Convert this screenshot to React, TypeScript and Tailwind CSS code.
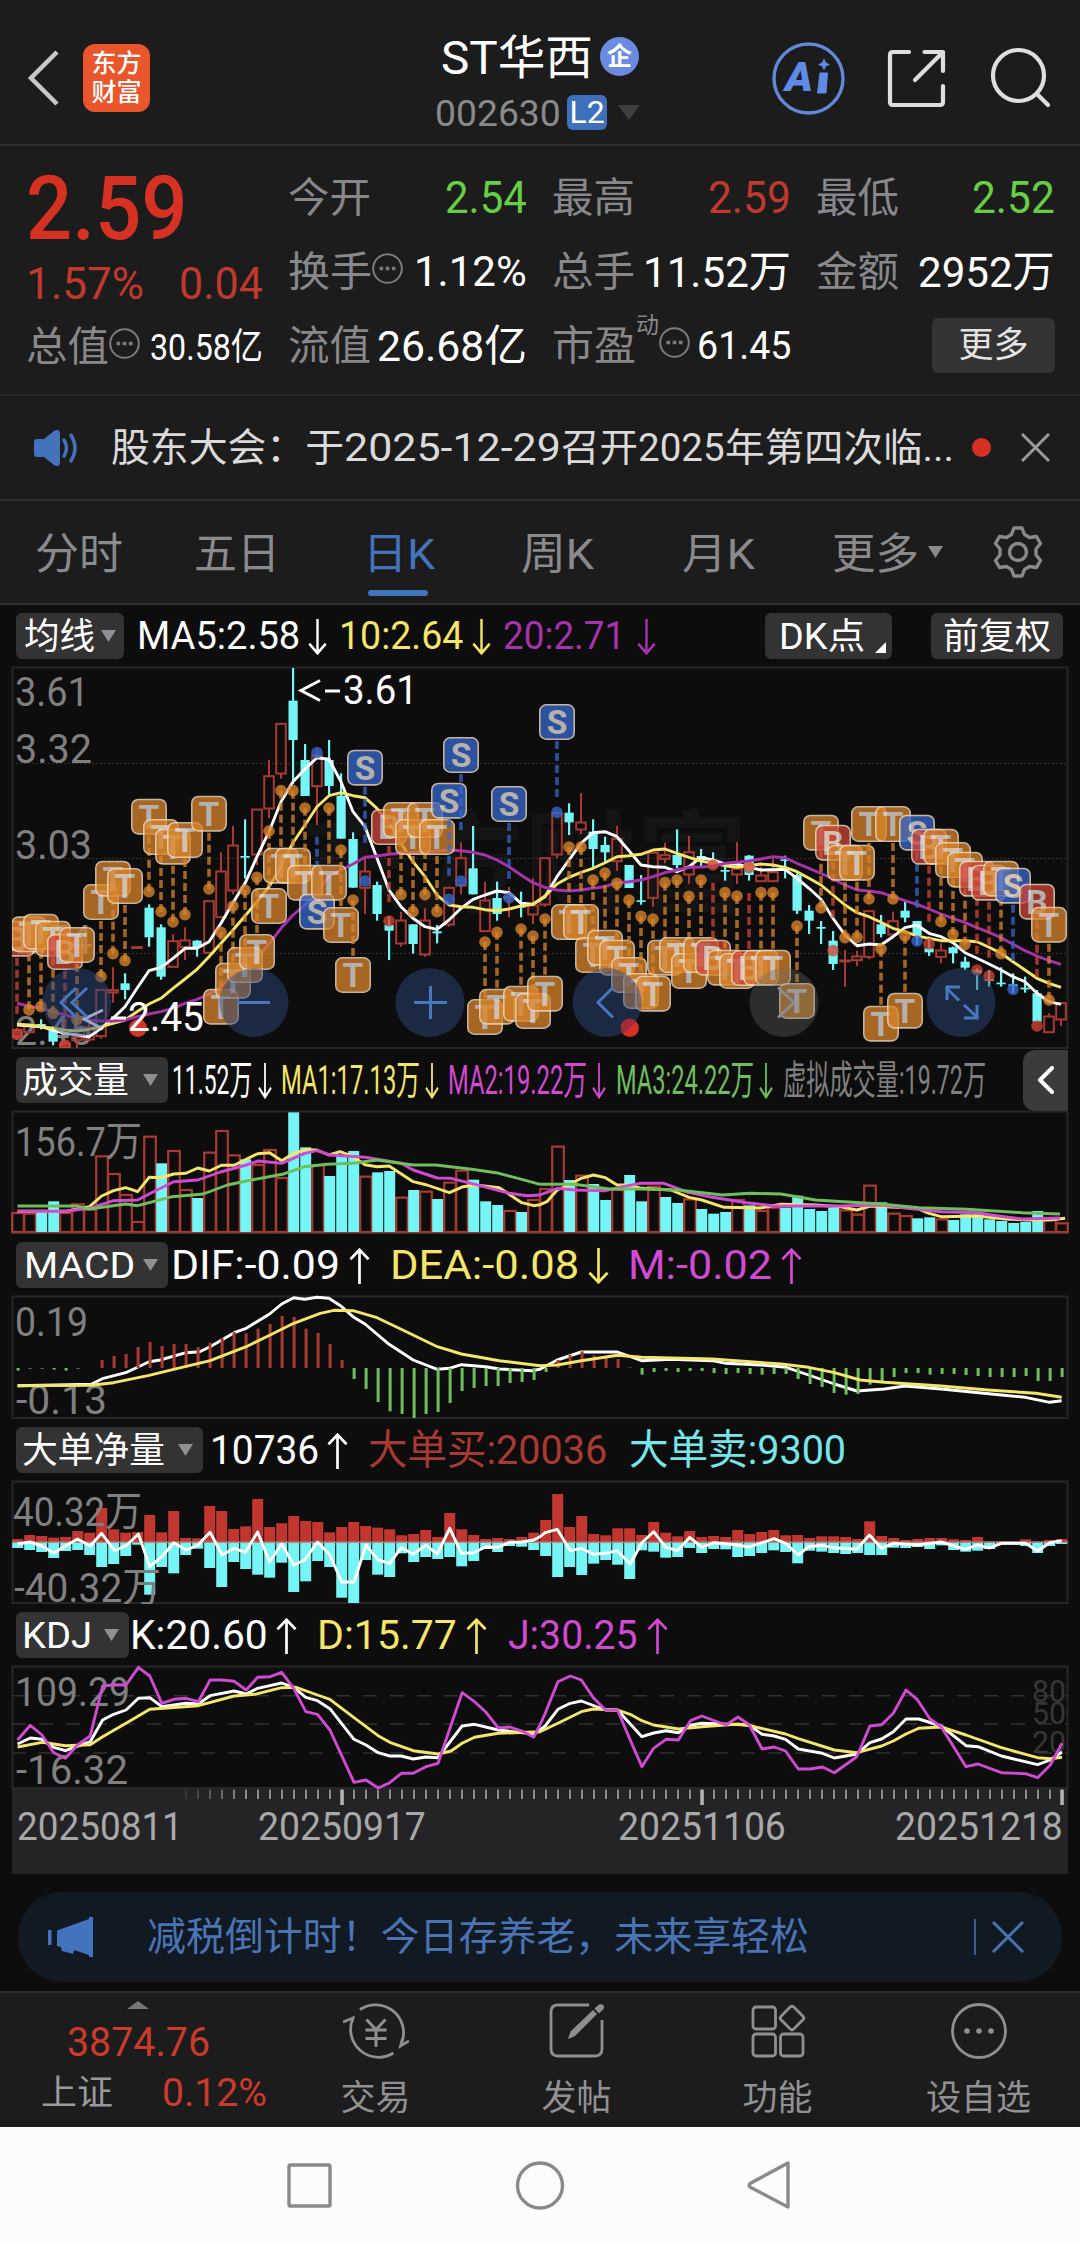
import { useLayoutEffect, useRef, useState, type ReactNode } from 'react'

// Stock detail page: quote header, daily K chart with trade markers and the
// four indicator panels below it (volume, MACD, big orders, KDJ).

const WHITE = '#ffffff'
const YELLOW = '#f5e66b'
const PURPLE = '#a632ad'
const PINK = '#d04ad2'
const GREEN = '#6fbf5f'
const CYAN = '#76f5f6'
const RED = '#a93a31'
const FRAME = '#262626'
const LABEL = '#808080'

const COUNT = 88
const STEP = 12
const cx = (i: number) => 17 + STEP * i

type Pt = [number, number]
type Candle = [kind: 'r' | 'c', high: number, top: number, bottom: number, low: number]
type Marker = [i: number, kind: 'T' | 'B' | 'S', y: number, dot: number]

// ---------- K chart data, y is at 3x of the panel's pixels ----------

const CANDLES: Candle[] = [
  ['r', 1104, 1108, 1132, 1140], ['r', 1090, 1096, 1118, 1122], ['c', 1078, 1092, 1100, 1108],
  ['c', 1098, 1105, 1145, 1156], ['r', 1140, 1148, 1165, 1166], ['r', 1120, 1130, 1142, 1166],
  ['r', 1085, 1100, 1140, 1146], ['r', 988, 988, 1130, 1136], ['r', 922, 989, 999, 1028],
  ['c', 940, 970, 990, 1018], ['r', 860, 860, 862, 862], ['c', 733, 743, 832, 860],
  ['c', 793, 802, 950, 959], ['r', 823, 842, 922, 922], ['r', 802, 840, 863, 900],
  ['c', 840, 842, 862, 890], ['r', 722, 722, 880, 880], ['r', 577, 633, 773, 773],
  ['r', 498, 555, 693, 703], ['c', 478, 588, 593, 655], ['r', 447, 447, 585, 615],
  ['r', 300, 347, 447, 475], ['r', 188, 190, 342, 356], ['c', 24, 122, 240, 370],
  ['c', 252, 300, 408, 408], ['r', 270, 285, 380, 495], ['c', 240, 300, 378, 405],
  ['c', 340, 407, 536, 536], ['c', 517, 537, 683, 683], ['r', 590, 633, 685, 762],
  ['c', 665, 675, 762, 782], ['c', 770, 795, 812, 900], ['r', 755, 780, 852, 860],
  ['c', 793, 793, 852, 881], ['r', 745, 780, 885, 890], ['c', 795, 814, 820, 850],
  ['r', 680, 682, 795, 800], ['r', 547, 593, 678, 703], ['c', 498, 625, 703, 703],
  ['r', 665, 720, 815, 815], ['c', 665, 714, 762, 782], ['r', 680, 709, 714, 772],
  ['c', 695, 738, 743, 772], ['r', 655, 735, 765, 792], ['r', 593, 593, 735, 740],
  ['r', 455, 458, 585, 595], ['c', 430, 458, 487, 525], ['r', 400, 486, 510, 522],
  ['c', 478, 515, 567, 622], ['c', 530, 555, 577, 605], ['r', 498, 535, 605, 633],
  ['c', 615, 615, 684, 684], ['c', 645, 721, 725, 734], ['r', 577, 577, 715, 740],
  ['r', 548, 584, 598, 610], ['c', 508, 585, 615, 625], ['r', 528, 575, 645, 672],
  ['c', 567, 588, 600, 620], ['c', 577, 600, 615, 625], ['c', 615, 630, 635, 662],
  ['r', 547, 625, 645, 672], ['c', 585, 587, 645, 662], ['r', 620, 645, 665, 665],
  ['r', 590, 635, 665, 665], ['c', 587, 598, 602, 655], ['c', 640, 645, 752, 762],
  ['c', 735, 752, 782, 822], ['c', 783, 801, 806, 852], ['c', 813, 842, 912, 930],
  ['r', 870, 900, 904, 980], ['r', 872, 888, 902, 918], ['r', 752, 752, 892, 898],
  ['c', 765, 793, 822, 832], ['r', 755, 782, 825, 832], ['c', 723, 752, 773, 787],
  ['c', 783, 783, 825, 855], ['c', 830, 865, 877, 888], ['r', 850, 870, 892, 910],
  ['c', 860, 862, 880, 910], ['c', 890, 905, 923, 930], ['c', 925, 930, 940, 990],
  ['c', 930, 958, 962, 980], ['c', 922, 968, 972, 980], ['c', 940, 973, 977, 1000],
  ['c', 950, 983, 988, 998], ['c', 990, 1000, 1085, 1085], ['r', 1060, 1068, 1118, 1118],
  ['r', 1028, 1028, 1080, 1098],
]

const MA5 = [
  1095, 1097, 1100, 1110, 1120, 1125, 1130, 1105, 1075, 1040, 985, 932, 922, 895, 865, 865, 845, 790,
  728, 670, 590, 515, 425, 365, 327, 293, 298, 365, 455, 500, 595, 690, 740, 775, 800, 808, 780, 745,
  718, 705, 693, 698, 730, 733, 710, 650, 600, 550, 518, 515, 530, 572, 615, 620, 622, 635, 620, 592,
  600, 612, 612, 622, 630, 629, 628, 655, 685, 718, 775, 825, 857, 852, 855, 830, 803, 795, 820, 830,
  848, 878, 895, 912, 930, 950, 965, 1000, 1025, 1033,
]
const MA10 = [
  1093, 1095, 1100, 1105, 1110, 1113, 1108, 1100, 1090, 1080, 1055, 1032, 1015, 985, 957, 928, 890, 850,
  810, 768, 725, 680, 620, 548, 495, 440, 407, 398, 407, 413, 445, 490, 550, 605, 650, 705, 735, 740,
  742, 749, 752, 747, 738, 733, 708, 672, 652, 637, 625, 608, 590, 587, 583, 570, 567, 580, 592, 603,
  610, 617, 622, 617, 612, 615, 622, 635, 655, 675, 705, 735, 758, 770, 787, 805, 815, 828, 835, 842,
  842, 842, 845, 862, 880, 905, 930, 955, 970, 982,
]
const MA20 = [
  1030, 1038, 1045, 1055, 1065, 1075, 1080, 1083, 1083, 1080, 1070, 1062, 1055, 1045, 1030, 1018, 1002,
  980, 950, 925, 895, 852, 805, 765, 735, 695, 650, 630, 612, 592, 588, 583, 580, 578, 578, 573, 570,
  572, 577, 585, 600, 620, 645, 668, 682, 690, 693, 690, 685, 680, 668, 665, 660, 650, 638, 630, 622,
  621, 618, 610, 607, 603, 597, 590, 593, 610, 625, 640, 657, 675, 690, 693, 698, 710, 722, 733, 747,
  762, 775, 788, 803, 817, 833, 853, 872, 888, 902, 913,
]

const MARKERS: Marker[] = [
  [0, 'B', 836, 1123], [1, 'T', 823, 1050], [2, 'T', 815, 1040], [3, 'T', 836, 1060], [4, 'B', 876, 1155],
  [5, 'T', 855, 1080], [7, 'T', 726, 950], [8, 'T', 656, 881], [9, 'T', 678, 902], [11, 'T', 470, 695],
  [12, 'T', 531, 755], [13, 'T', 560, 786], [14, 'T', 540, 764], [16, 'T', 461, 687], [17, 'T', 1040, 817],
  [18, 'T', 962, 738], [19, 'T', 915, 690], [20, 'T', 876, 652], [21, 'T', 738, 513], [22, 'T', 617, 392],
  [23, 'T', 617, 392], [24, 'T', 668, 444], [25, 'S', 755, 278], [26, 'T', 668, 444], [27, 'T', 795, 570],
  [28, 'T', 945, 720], [29, 'S', 323, 663], [31, 'B', 501, 783], [32, 'T', 480, 704], [33, 'T', 531, 755],
  [34, 'T', 480, 704], [35, 'T', 531, 755], [36, 'S', 422, 718], [37, 'S', 285, 663], [39, 'T', 1071, 846],
  [40, 'T', 1040, 817], [41, 'S', 432, 714], [42, 'T', 1031, 807], [43, 'T', 1053, 828], [44, 'T', 1001, 777],
  [45, 'S', 186, 457], [46, 'T', 786, 561], [47, 'T', 786, 561], [48, 'T', 885, 660], [49, 'T', 863, 639],
  [50, 'T', 893, 670], [51, 'T', 945, 720], [52, 'T', 993, 769], [53, 'T', 1001, 777], [54, 'T', 893, 668],
  [55, 'T', 885, 660], [56, 'T', 933, 709], [57, 'T', 885, 660], [58, 'B', 893, 615], [59, 'T', 923, 698],
  [60, 'T', 933, 708], [61, 'B', 924, 622], [62, 'T', 923, 698], [63, 'T', 923, 698], [65, 'T', 1023, 798],
  [67, 'T', 518, 744], [68, 'B', 548, 872], [69, 'T', 608, 833], [70, 'T', 608, 832], [71, 'T', 492, 717],
  [72, 'T', 1091, 867], [73, 'T', 492, 717], [74, 'T', 1052, 828], [75, 'S', 518, 843], [76, 'B', 560, 852],
  [77, 'T', 560, 785], [78, 'T', 600, 823], [79, 'T', 629, 853], [80, 'B', 656, 930], [81, 'B', 668, 948],
  [82, 'T', 656, 881], [83, 'S', 677, 988], [85, 'B', 725, 1098], [86, 'T', 794, 1020],
]

const MARKER_COLOR = { T: '#d9842a', B: '#cf4436', S: '#3668cf' }

// ---------- indicator data ----------

// up/down flag + bar top, 3x of the panel's pixels
const VOLUME =
  'r519 r521 c516 c484 r519 r493 r509 r349 r402 r465 r546 r290 c370 r333 r450 c474 r338 r273 r346 c358 r375 r330 r414 c217 c322 r375 c408 c346 c333 r410 c397 c393 r473 c450 r455 c477 r428 r392 c419 c484 c495 r513 c516 r480 r447 r320 c420 r407 c432 c480 r450 c405 c484 r440 c471 c489 r478 c507 c521 c516 r480 c496 r513 r503 c503 c467 c507 c513 c503 r511 r524 r437 c487 r521 r528 c535 c532 r538 c540 c523 c523 c538 c543 c549 c546 c513 r540 r550'
    .split(' ')
    .map(s => ({ up: s[0] === 'r', top: Number(s.slice(1)) / 3 }))

const MACD_BARS = [
  -8, -2, -2, -5, -8, -2, 0, 24, 36, 42, 63, 78, 66, 72, 72, 63, 76, 90, 108, 104, 118, 132, 156, 153, 118,
  105, 72, 24, -33, -63, -102, -130, -138, -150, -138, -132, -105, -69, -60, -54, -54, -45, -42, -36, -12,
  24, 40, 50, 38, 30, 27, 2, -20, -12, -9, -12, -9, -9, -15, -18, -15, -18, -20, -18, -18, -33, -48, -57,
  -75, -80, -78, -50, -42, -27, -15, -15, -20, -18, -18, -21, -24, -27, -27, -27, -24, -39, -39, -27,
]

const ORDERS_UP = [
  357, 345, 348, 353, 351, 333, 338, 264, 328, 338, 336, 285, 337, 273, 354, 355, 258, 273, 327, 319, 237,
  321, 310, 288, 303, 306, 337, 321, 306, 318, 323, 328, 346, 342, 330, 351, 279, 328, 345, 357, 354, 357,
  351, 338, 300, 222, 321, 288, 342, 346, 325, 325, 345, 306, 338, 349, 333, 351, 348, 351, 330, 342, 336,
  330, 346, 345, 354, 349, 349, 351, 357, 304, 348, 354, 360, 357, 354, 354, 358, 360, 351, 364, 364, 365,
  358, 364, 360, 357,
]
const ORDERS_DOWN = [
  384, 390, 396, 414, 393, 390, 405, 441, 432, 408, 374, 524, 441, 460, 405, 386, 444, 501, 426, 447, 464,
  473, 428, 516, 484, 423, 441, 533, 549, 420, 464, 471, 400, 426, 411, 417, 411, 439, 423, 387, 396, 378,
  380, 390, 408, 471, 441, 465, 431, 420, 434, 477, 391, 395, 413, 411, 384, 399, 387, 388, 411, 408, 399,
  391, 396, 430, 392, 395, 399, 402, 399, 405, 405, 383, 384, 381, 387, 376, 390, 395, 392, 387, 374, 374,
  378, 399, 378, 372,
]

// Each line is kept as two halves, the second one starts at x = 540.
const HALF = 540
const SX = 2.904
const halves = (left: Pt[], right: Pt[]) =>
  [...left.map(([x, y]) => [x / SX, y / 3]), ...right.map(([x, y]) => [HALF + x / SX, y / 3])]
    .map(p => p.map(n => n.toFixed(1)).join(','))
    .join(' ')

const VOL_MA1 = halves(
  [[51, 514], [190, 514], [260, 500], [295, 468], [330, 452], [365, 443], [400, 455], [433, 412], [470, 413], [504, 402], [540, 400], [574, 384], [608, 393], [643, 376], [680, 376], [748, 341], [783, 338], [818, 362], [853, 340], [885, 330], [920, 330], [955, 345], [988, 335], [1025, 350], [1060, 374], [1095, 380], [1130, 378], [1200, 425], [1240, 435], [1305, 458], [1345, 440], [1380, 435], [1450, 443], [1515, 488], [1550, 497]],
  [[0, 494], [20, 485], [50, 450], [84, 435], [120, 415], [155, 405], [190, 413], [224, 435], [260, 435], [295, 445], [380, 450], [433, 472], [470, 480], [535, 502], [640, 504], [700, 493], [800, 495], [870, 500], [920, 510], [960, 498], [1095, 505], [1130, 520], [1165, 530], [1270, 528], [1350, 537], [1420, 540], [1480, 540], [1525, 535]],
)
const VOL_MA2 = halves(
  [[51, 514], [190, 514], [260, 505], [330, 482], [400, 480], [433, 462], [504, 425], [574, 420], [640, 396], [715, 375], [750, 363], [818, 370], [885, 340], [920, 332], [960, 345], [1060, 352], [1165, 370], [1200, 390], [1270, 414], [1310, 415], [1380, 433], [1480, 460], [1530, 467]],
  [[0, 465], [50, 445], [100, 450], [190, 452], [240, 440], [290, 430], [360, 430], [430, 457], [500, 472], [600, 488], [680, 498], [870, 498], [990, 495], [1095, 508], [1165, 515], [1270, 518], [1310, 525], [1400, 537], [1510, 534]],
)
const VOL_MA3 = halves(
  [[51, 498], [220, 498], [260, 507], [365, 492], [400, 497], [500, 470], [590, 462], [660, 435], [730, 420], [820, 403], [885, 380], [950, 373], [1025, 370], [1095, 360], [1200, 375], [1265, 375], [1370, 388], [1440, 398], [1515, 418]],
  [[0, 433], [100, 433], [200, 447], [290, 447], [400, 450], [530, 465], [610, 460], [700, 462], [800, 480], [990, 492], [1100, 503], [1240, 508], [1400, 518], [1510, 522]],
)
const DIF = halves(
  [[51, 1037], [265, 1033], [300, 1015], [365, 998], [433, 965], [465, 960], [540, 938], [580, 935], [610, 920], [680, 878], [715, 865], [783, 822], [818, 792], [853, 773], [885, 778], [920, 772], [955, 775], [990, 798], [1025, 830], [1060, 852], [1130, 913], [1200, 960], [1270, 988], [1305, 985], [1340, 974], [1410, 980], [1450, 987], [1545, 992]],
  [[0, 988], [50, 960], [120, 936], [225, 936], [295, 962], [380, 958], [500, 962], [540, 970], [640, 975], [715, 982], [780, 1005], [855, 1032], [920, 1053], [1000, 1047], [1060, 1038], [1165, 1047], [1340, 1065], [1410, 1072], [1480, 1087], [1515, 1082]],
)
const DEA = halves(
  [[51, 1037], [265, 1036], [330, 1028], [433, 1006], [504, 988], [610, 962], [715, 920], [783, 886], [853, 850], [930, 820], [970, 811], [1025, 812], [1095, 833], [1165, 868], [1270, 920], [1340, 942], [1450, 962]],
  [[0, 977], [50, 975], [120, 962], [225, 946], [295, 952], [500, 957], [700, 972], [780, 982], [855, 998], [930, 1020], [1000, 1027], [1165, 1038], [1300, 1050], [1440, 1060], [1515, 1072]],
)
const NET = halves(
  [[51, 372], [87, 366], [122, 378], [156, 399], [190, 378], [225, 357], [262, 378], [295, 340], [333, 392], [368, 376], [402, 342], [435, 440], [470, 410], [505, 368], [540, 390], [574, 376], [610, 337], [645, 405], [680, 385], [713, 397], [748, 336], [783, 425], [818, 372], [853, 435], [885, 420], [922, 366], [958, 405], [992, 486], [1028, 486], [1063, 375], [1098, 420], [1132, 430], [1165, 383], [1200, 402], [1237, 376], [1270, 402], [1306, 325], [1340, 400], [1375, 398], [1410, 381], [1445, 382], [1480, 367], [1515, 366], [1550, 360]],
  [[0, 350], [15, 338], [50, 328], [88, 392], [120, 385], [155, 403], [190, 400], [224, 392], [262, 432], [296, 368], [330, 335], [366, 382], [400, 392], [435, 352], [470, 382], [505, 368], [572, 375], [608, 381], [645, 368], [680, 356], [713, 370], [750, 405], [780, 380], [820, 376], [853, 383], [920, 388], [957, 345], [992, 385], [1026, 370], [1095, 375], [1165, 366], [1235, 388], [1270, 375], [1305, 384], [1340, 370], [1410, 370], [1445, 393], [1480, 368], [1515, 362]],
)
const K_LINE = halves(
  [[51, 972], [88, 954], [122, 958], [156, 982], [190, 992], [262, 965], [298, 900], [330, 883], [366, 870], [402, 835], [435, 833], [470, 860], [540, 850], [576, 852], [610, 827], [680, 813], [715, 822], [748, 805], [818, 789], [853, 802], [888, 832], [922, 842], [958, 866], [1028, 958], [1063, 975], [1098, 998], [1132, 1008], [1165, 1008], [1200, 1017], [1237, 1011], [1272, 1013], [1342, 918], [1378, 913], [1447, 930], [1550, 942]],
  [[0, 930], [15, 918], [52, 868], [88, 850], [120, 843], [190, 870], [225, 870], [296, 950], [330, 939], [366, 932], [402, 938], [437, 916], [470, 910], [608, 915], [645, 943], [680, 948], [713, 958], [750, 987], [820, 1000], [855, 1014], [920, 1002], [958, 968], [992, 957], [1026, 935], [1063, 897], [1100, 897], [1165, 918], [1237, 977], [1272, 980], [1340, 1008], [1445, 1034], [1482, 1020], [1516, 996]],
)
const D_LINE = halves(
  [[51, 981], [122, 967], [190, 977], [262, 974], [298, 950], [366, 910], [435, 868], [576, 857], [680, 828], [740, 823], [818, 803], [860, 802], [922, 825], [958, 838], [1028, 893], [1098, 947], [1132, 967], [1200, 992], [1272, 1002], [1310, 993], [1342, 970], [1378, 952], [1447, 940]],
  [[0, 935], [52, 910], [120, 875], [155, 867], [225, 870], [262, 883], [296, 902], [330, 915], [402, 927], [470, 920], [575, 912], [610, 917], [713, 942], [750, 956], [855, 990], [920, 998], [992, 978], [1026, 963], [1063, 942], [1100, 925], [1165, 921], [1237, 945], [1340, 983], [1445, 1013], [1482, 1016], [1516, 1012]],
)
const J_LINE = halves(
  [[51, 960], [88, 916], [122, 945], [156, 998], [190, 1015], [225, 975], [262, 948], [298, 798], [330, 794], [366, 795], [402, 742], [435, 768], [470, 850], [505, 838], [540, 835], [576, 845], [610, 780], [645, 780], [680, 784], [715, 810], [748, 772], [785, 770], [818, 757], [853, 805], [888, 875], [922, 883], [958, 930], [1028, 1087], [1063, 1080], [1098, 1104], [1132, 1088], [1165, 1060], [1200, 1060], [1237, 1040], [1272, 1030], [1342, 818], [1378, 845], [1410, 875], [1447, 924], [1480, 921], [1520, 935], [1550, 952]],
  [[0, 915], [15, 880], [52, 785], [88, 768], [120, 780], [155, 833], [190, 870], [225, 870], [262, 960], [296, 1040], [330, 985], [366, 958], [402, 960], [437, 902], [470, 888], [540, 915], [575, 891], [608, 915], [645, 987], [680, 981], [713, 993], [750, 1047], [785, 1047], [820, 1041], [855, 1058], [920, 1010], [958, 918], [992, 914], [1026, 880], [1063, 810], [1095, 838], [1132, 896], [1165, 920], [1237, 1040], [1272, 1032], [1340, 1058], [1410, 1061], [1445, 1073], [1482, 1035], [1516, 970]],
)

// ---------- small pieces ----------

// Squeezes or stretches one line of text to the width of its box.
function Fit({ className = '', children }: { className?: string; children: ReactNode }) {
  const box = useRef<HTMLSpanElement>(null)
  const text = useRef<HTMLSpanElement>(null)
  const [scale, setScale] = useState(1)

  useLayoutEffect(() => {
    if (box.current && text.current) setScale(box.current.clientWidth / text.current.offsetWidth)
  }, [])

  return (
    <span ref={box} className={`block flex-shrink-0 whitespace-nowrap leading-none pt-[2px] ${className}`}>
      <span ref={text} className="inline-block origin-left" style={{ transform: `scaleX(${scale})` }}>
        {children}
      </span>
    </span>
  )
}

function Arrow({ down, className = '' }: { down?: boolean; className?: string }) {
  return (
    <svg className={`h-[36px] mt-[2px] flex-shrink-0 ${className}`} viewBox="0 0 22 37" preserveAspectRatio="none" fill="none" stroke="currentColor" strokeWidth={2.8}>
      {down ? <path d="M11 0v35M1.5 25.5L11 35.2l9.5-9.7" /> : <path d="M11 37V2M1.5 11.5L11 1.8l9.5 9.7" />}
    </svg>
  )
}

function Dots() {
  return (
    <svg className="w-[31px] h-[31px] -mt-[5px] flex-shrink-0" viewBox="0 0 31 31" fill="none" stroke="#7c7c7f" strokeWidth={2}>
      <circle cx="15.5" cy="15.5" r="14.3" />
      <path d="M7.5 15.5h3.6M13.700 15.5h3.600M19.900 15.5h3.600" strokeWidth={3.400} />
    </svg>
  )
}

function Picker({ className = '', children, width }: { className?: string; children: ReactNode; width: string }) {
  return (
    <button className={`h-[46px] flex-shrink-0 flex items-center justify-between rounded-md bg-[#333333] pl-[6px] pr-[10px] text-[36px] text-white ${className}`}>
      <Fit className={width}>{children}</Fit>
      <svg className="w-[15px] h-[12px]" viewBox="0 0 15 12" fill="#8f8f94">
        <path d="M0 0h15L7.5 12z" />
      </svg>
    </button>
  )
}

function SvgText({ x, y, w, size = 41, fill = LABEL, children }: { x: number; y: number; w: number; size?: number; fill?: string; children: string }) {
  return (
    <text x={x} y={y} fontSize={size} fill={fill} textLength={w} lengthAdjust="spacingAndGlyphs">
      {children}
    </text>
  )
}

function Line({ points, color }: { points: string; color: string }) {
  return <polyline points={points} fill="none" stroke={color} strokeWidth={2.9} strokeLinejoin="round" />
}

function Header() {
  return (
    <header className="h-[146px] flex-shrink-0 border-b-2 border-[#303030] flex items-start justify-between relative">
      <div className="flex items-center pl-[27px] pt-[44px] gap-[25px]">
        <svg className="w-[32px] h-[56px]" viewBox="0 0 32 56" fill="none" stroke="#c8c8c8" strokeWidth={4.5}>
          <path d="M30 2L4 28l26 26" />
        </svg>
        <div className="w-[67px] h-[68px] -ml-px rounded-xl bg-[#ea562b] text-white font-medium text-[25px] leading-[29px] flex flex-col items-center justify-center">
          <span>东方</span>
          <span>财富</span>
        </div>
      </div>

      <div className="absolute left-[435px] top-[30px]">
        <div className="flex items-center h-[52px] pl-[6px] gap-[7px]">
          <Fit className="w-[152px] text-[47px] text-white">ST华西</Fit>
          <span className="w-[39px] h-[39px] rounded-full bg-[#6a8be0] text-white text-[25px] font-bold leading-none flex items-center justify-center">企</span>
        </div>
        <div className="flex items-center h-[40px] mt-[10px]">
          <Fit className="w-[126px] text-[37px] text-[#8a8a8d]">002630</Fit>
          <span className="ml-[6px] w-[40px] h-[35px] rounded-md bg-[#3f70bb] text-white text-[32px] leading-none flex items-center justify-center">L2</span>
          <svg className="ml-[11px] w-[22px] h-[15px]" viewBox="0 0 22 15" fill="#3e3e40">
            <path d="M0 0h22L11 15z" />
          </svg>
        </div>
      </div>

      <svg className="w-[300px] h-[100px] mt-[30px] mr-[10px]" viewBox="0 0 300 100" fill="none">
        <circle cx="38.5" cy="48.5" r="34.5" stroke="#6288d8" strokeWidth={3.4} />
        <text x="15" y="61" fontSize="41" fontWeight="900" fontStyle="italic" fill="#5f8ae6" textLength="28" lengthAdjust="spacingAndGlyphs">A</text>
        <path d="M50 43h7.5l-1.5 20h-8.5z" fill="#5f8ae6" stroke="#5f8ae6" strokeLinejoin="round" />
        <path d="M54 28.5l2 4 4 2-4 2-2 4-2-4-4-2 4-2z" fill="#5f8ae6" />
        <g stroke="#dedede" strokeWidth={4.2} strokeLinecap="round" strokeLinejoin="round">
          <path d="M139 22h-16q-3 0-3 3v47q0 3 3 3h47q3 0 3-3V56M154.500 22H173v19M172 23l-27 27" />
          <circle cx="248.500" cy="45.500" r="25.500" />
          <path d="M267 64l11 11" />
        </g>
      </svg>
    </header>
  )
}

function Cell({ label, children }: { label: ReactNode; children?: ReactNode }) {
  return (
    <div className="h-[74px] flex items-center justify-between text-white">
      <div className="flex items-center text-[41px] text-[#88888b]">{label}</div>
      {children}
    </div>
  )
}

function Quote() {
  return (
    <section className="h-[250px] flex-shrink-0 border-b-2 border-[#262626] flex pl-[26px] pt-[14px]">
      <div className="w-[237px] text-[#d63224]">
        <Fit className="w-[161px] h-[95px] !pt-[4px] text-[89px] font-medium">2.59</Fit>
        <div className="h-[55px] flex items-center justify-between text-[#c0392d] text-[44px]">
          <Fit className="w-[118px]">1.57%</Fit>
          <Fit className="w-[84px]">0.04</Fit>
        </div>
        <div className="-mt-[1px]">
          <Cell label={<><Fit className="w-[83px]">总值</Fit><Dots /></>}>
            <Fit className="w-[113px] text-[37px]">30.58亿</Fit>
          </Cell>
        </div>
      </div>
      <div className="w-[239px] ml-[25px]">
        <Cell label={<Fit className="w-[83px]">今开</Fit>}><Fit className="w-[82px] text-[44px] text-[#67cf45]">2.54</Fit></Cell>
        <Cell label={<><Fit className="w-[84px]">换手</Fit><Dots /></>}>
          <Fit className="w-[113px] text-[42px]">1.12%</Fit>
        </Cell>
        <Cell label={<Fit className="w-[83px]">流值</Fit>}><Fit className="w-[150px] text-[43px]">26.68亿</Fit></Cell>
      </div>
      <div className="w-[239px] ml-[25px]">
        <Cell label={<Fit className="w-[83px]">最高</Fit>}><Fit className="w-[83px] text-[44px] text-[#c0392d]">2.59</Fit></Cell>
        <Cell label={<Fit className="w-[83px]">总手</Fit>}><Fit className="w-[148px] text-[43px]">11.52万</Fit></Cell>
        <Cell label={<><Fit className="w-[84px]">市盈</Fit><span className="text-[23px] leading-none -mt-10">动</span><Dots /></>}>
          <Fit className="w-[94px] text-[38px]">61.45</Fit>
        </Cell>
      </div>
      <div className="w-[239px] ml-[25px]">
        <Cell label={<Fit className="w-[83px]">最低</Fit>}><Fit className="w-[83px] text-[44px] text-[#67cf45]">2.52</Fit></Cell>
        <Cell label={<Fit className="w-[83px]">金额</Fit>}><Fit className="w-[137px] text-[43px]">2952万</Fit></Cell>
        <div className="h-[74px] flex items-center justify-end">
          <button className="w-[123px] h-[55px] rounded-md bg-[#333333] text-[#e4e4e4] text-[35px] leading-none flex items-center justify-center">更多</button>
        </div>
      </div>
    </section>
  )
}

function Notice() {
  return (
    <section className="h-[105px] flex-shrink-0 border-b-2 border-[#303030] flex items-center pl-[33px]">
      <svg className="w-[46px] h-[38px]" viewBox="0 0 46 38" fill="#4373bd">
        <path d="M1 13q0-3 3-3h7L21 2q6-3 6 3v28q0 6-6 3L11 28H4q-3 0-3-3z" />
        <path d="M31 11q5 8 0 16M38 6q8 13 0 26" fill="none" stroke="#4373bd" strokeWidth={3.4} strokeLinecap="round" />
      </svg>
      <div className="ml-[32px] w-[843px] flex items-center text-[39px] text-[#dadada]">
        <Fit className="w-[233px]">股东大会：于</Fit>
        <Fit className="w-[217px]">2025-12-29</Fit>
        <Fit className="w-[77px]">召开</Fit>
        <Fit className="w-[87px]">2025</Fit>
        <Fit className="w-[229px]">年第四次临...</Fit>
      </div>
      <span className="ml-[18px] w-[19px] h-[19px] rounded-full bg-[#d63224]" />
      <svg className="ml-[30px] w-[29px] h-[29px]" viewBox="0 0 29 29" stroke="#9a9a9c" strokeWidth={3}>
        <path d="M1 1l27 27M28 1L1 28" />
      </svg>
    </section>
  )
}

function Tabs() {
  return (
    <nav className="h-[104px] flex-shrink-0 border-b-2 border-[#303030] flex items-center text-[43px] text-[#8a8a8d] pl-[35px] relative">
      <Fit className="w-[88px] !pt-[4px]">分时</Fit>
      <Fit className="w-[86px] !pt-[4px] ml-[71px]">五日</Fit>
      <Fit className="w-[72px] !pt-[4px] ml-[83px] text-[#4373bd]">日K</Fit>
      <Fit className="w-[73px] !pt-[4px] ml-[86px]">周K</Fit>
      <Fit className="w-[73px] !pt-[4px] ml-[88px]">月K</Fit>
      <Fit className="w-[87px] !pt-[4px] ml-[77px]">更多</Fit>
      <svg className="ml-[9px] w-[15px] h-[12px]" viewBox="0 0 15 12" fill="#8a8a8d">
        <path d="M0 0h15L7.500 12z" />
      </svg>
      <svg className="ml-[48px] w-[54px] h-[54px]" viewBox="0 0 54 54" fill="none" stroke="#8a8a8d" strokeWidth={3.400} strokeLinejoin="round">
        <path d="M23 3h8l2.500 6.500 5 3 7-1 4 7L45 24v6l4.500 5.500-4 7-7-1-5 3L31 51h-8l-2.500-6.500-5-3-7 1-4-7L9 30v-6l-4.500-5.500 4-7 7 1 5-3z" />
        <circle cx="27" cy="27" r="8.500" />
      </svg>
      <span className="absolute left-[368px] bottom-[7px] w-[60px] h-[6px] rounded-full bg-[#4373bd]" />
    </nav>
  )
}

function CandleShape({ i, candle }: { i: number; candle: Candle }) {
  const [kind, high, top, bottom, low] = candle
  const x = cx(i)
  const h = Math.max((bottom - top) / 3, 1.6)
  if (kind === 'c') {
    return (
      <g fill={CYAN}>
        <rect x={x - 1} y={high / 3} width={2.2} height={(low - high) / 3} />
        <rect x={x - 4.5} y={top / 3} width={9.2} height={h} />
      </g>
    )
  }
  return (
    <g stroke={RED} strokeWidth={2} fill="none">
      <path d={`M${x} ${high / 3}V${top / 3}M${x} ${bottom / 3}V${low / 3}`} />
      <rect x={x - 4.8} y={top / 3 + 0.5} width={9.6} height={Math.max(h - 1, 0.8)} />
    </g>
  )
}

function MarkerShape({ marker }: { marker: Marker }) {
  const [i, kind, y3, dot3] = marker
  const x = cx(i)
  const y = y3 / 3
  const dir = dot3 > y3 ? 1 : -1
  const color = MARKER_COLOR[kind]
  return (
    <g>
      <path d={`M${x} ${y + dir * 19}V${y + dir * 75}`} stroke={color} strokeWidth={3.6} strokeDasharray="8 4" opacity={0.75} />
      <circle cx={x} cy={dot3 / 3} r={5.800} fill={color} opacity={0.78} />
      <g opacity={0.82}>
        <rect x={x - 17.2} y={y - 17.2} width={34.4} height={34.4} rx={6.5} fill={color} fillOpacity={0.92} stroke="#efd9bd" strokeWidth={1.6} />
        <text x={x} y={y + 11.900} textAnchor="middle" fontSize={33.500} fontWeight={700} fill="#dcd5cf">{kind}</text>
      </g>
    </g>
  )
}

function KChart() {
  const avg = (ys: number[]) => ys.map((y, i) => `${cx(i)},${(y / 3).toFixed(1)}`).join(' ')
  return (
    <svg className="w-[1080px] h-[390px] block flex-shrink-0" viewBox="0 0 1080 390">
      <clipPath id="plot"><rect x="12" y="7" width="1056" height="381" /></clipPath>
      <text x="300" y="245" fontSize="112" fontWeight="700" fill="#141414">东方财富</text>
      <g stroke="#303030" strokeDasharray="2 2">
        <path d="M12 103.500h1056M12 198.500h1056M12 293.500h1056" />
      </g>
      <rect x="12.500" y="7.500" width="1055" height="380.500" fill="none" stroke={FRAME} strokeWidth={2} />
      <SvgText x={15} y={45.500} w={74}>3.61</SvgText>
      <SvgText x={15} y={102.500} w={77}>3.32</SvgText>
      <SvgText x={15} y={198.500} w={77}>3.03</SvgText>
      <SvgText x={15} y={293.500} w={77}>2.74</SvgText>
      <SvgText x={15} y={384.500} w={77}>2.45</SvgText>
      <g clipPath="url(#plot)">
        {CANDLES.map((candle, i) => <CandleShape key={i} i={i} candle={candle} />)}
        <Line points={avg(MA5)} color={WHITE} />
        <Line points={avg(MA10)} color={YELLOW} />
        <Line points={avg(MA20)} color={PURPLE} />
        <path d="M103 350L84 359l19 10" fill="none" stroke={WHITE} strokeWidth={3} />
        <path d="M111 358h15" stroke={WHITE} strokeWidth={3} />
        <circle cx="138" cy="368" r="9" fill="#d63228" />
        {MARKERS.map(marker => <MarkerShape key={marker[0]} marker={marker} />)}
      </g>
      <path d="M320 20.500L301 30.500l19 10" fill="none" stroke={WHITE} strokeWidth={3} />
      <path d="M325 31h15" stroke={WHITE} strokeWidth={3} />
      <SvgText x={343} y={43.500} w={75} fill={WHITE}>3.61</SvgText>
      <SvgText x={128} y={370.500} w={76} fill={WHITE}>2.45</SvgText>

      {[77, 254, 430, 607, 961].map(x => <circle key={x} cx={x} cy={342.500} r={34.500} fill="#2c4a7e" fillOpacity={0.48} />)}
      <circle cx="784" cy="342.500" r="34.500" fill="#6a6a6a" fillOpacity={0.35} />
      <g fill="none" stroke="#4877bd" strokeWidth={3}>
        <path d="M76 328L61 342.500l15 14.500M87 328L72 342.500 87 357" />
        <path d="M237 342.500h33M414 342.500h33M430.500 326v33" />
        <path d="M613 327.500L598 342.500l15 15" />
        <path d="M947 340V327h13M946 327.500l13 13M977 345v13h-13M978 358l-14-13" />
      </g>
      <path d="M778 327.500L794 342.500l-16 15" fill="none" stroke="#8c8c8c" strokeWidth={3} />
      <circle cx="630" cy="368" r="9" fill="#d63228" />
      <path d="M630 368L636.500 361.500A9 9 0 1 0 623 373.500z" fill="#a32c3a" />
    </svg>
  )
}

function VolumeChart() {
  // panel starts at 1110, values count from 1040
  return (
    <svg className="w-[1080px] h-[124px] block flex-shrink-0" viewBox="0 70 1080 124">
      <rect x="12.500" y="71.500" width="1055" height="121" fill="none" stroke={FRAME} strokeWidth={2} />
      {VOLUME.map(({ up, top }, i) =>
        up ? (
          <rect key={i} x={cx(i) - 4.800} y={top} width={11.600} height={192 - top} fill="none" stroke={RED} strokeWidth={2.200} />
        ) : (
          <rect key={i} x={cx(i) - 4.800} y={top} width={11} height={192 - top} fill={CYAN} />
        ),
      )}
      <SvgText x={15} y={116} w={127}>156.7万</SvgText>
      <Line points={VOL_MA1} color={YELLOW} />
      <Line points={VOL_MA2} color={PINK} />
      <Line points={VOL_MA3} color={GREEN} />
      <path d="M12 192.700h1056" stroke="#7d3f3a" strokeWidth={1.600} />
    </svg>
  )
}

function MacdChart() {
  return (
    <svg className="w-[1080px] h-[124px] block flex-shrink-0" viewBox="0 255 1080 124">
      <rect x="12.500" y="256.500" width="1055" height="121.500" fill="none" stroke={FRAME} strokeWidth={2} />
      <SvgText x={15} y={296} w={73}>0.19</SvgText>
      <SvgText x={16} y={373.500} w={91}>-0.13</SvgText>
      <Line points={DIF} color={WHITE} />
      {MACD_BARS.map((v, i) => {
        const h = Math.abs(v) / 3
        return <rect key={i} x={cx(i) - 0.400} y={v > 0 ? 328 - h : 328} width={3} height={h} fill={v > 0 ? RED : GREEN} />
      })}
      <Line points={DEA} color={YELLOW} />
    </svg>
  )
}

function OrdersChart() {
  return (
    <svg className="w-[1080px] h-[124px] block flex-shrink-0" viewBox="0 60 1080 124">
      <rect x="12.500" y="61.500" width="1055" height="121.500" fill="none" stroke={FRAME} strokeWidth={2} />
      {ORDERS_UP.map((y, i) => <rect key={i} x={cx(i) - 4.800} y={y / 3} width={11} height={122.700 - y / 3} fill="#c23630" />)}
      {ORDERS_DOWN.map((y, i) => <rect key={i} x={cx(i) - 4.800} y={122.700} width={11} height={y / 3 - 122.700} fill={CYAN} />)}
      <path d="M12 122.200h1056" stroke="#b08a86" strokeWidth={1.400} />
      <SvgText x={13} y={105.500} w={129}>40.32万</SvgText>
      <SvgText x={14} y={182} w={147}>-40.32万</SvgText>
      <Line points={NET} color={WHITE} />
    </svg>
  )
}

function KdjChart() {
  return (
    <svg className="w-[1080px] h-[124px] block flex-shrink-0" viewBox="0 245 1080 124">
      <rect x="12.500" y="246.500" width="1055" height="121.500" fill="none" stroke={FRAME} strokeWidth={2} />
      <path d="M12 275.700h1056M12 304h1056M12 333h1056" stroke="#303030" strokeWidth={1.600} strokeDasharray="14 13" />
      <SvgText x={15} y={286} w={115}>109.29</SvgText>
      <SvgText x={16} y={364} w={112}>-16.32</SvgText>
      <SvgText x={1032} y={282} w={34} size={31} fill="#363636">80</SvgText>
      <SvgText x={1032} y={303.500} w={34} size={31} fill="#363636">50</SvgText>
      <SvgText x={1032} y={332.500} w={34} size={31} fill="#363636">20</SvgText>
      <Line points={K_LINE} color={WHITE} />
      <Line points={D_LINE} color={YELLOW} />
      <Line points={J_LINE} color={PINK} />
    </svg>
  )
}

function TimeAxis() {
  const ticks = Array.from({ length: COUNT }, (_, i) => i).slice(14)
  const major = [27, 57, 87]
  return (
    <div className="mx-3 h-[85px] flex-shrink-0 bg-[#242426] text-[38px] text-[#a9a9a9]">
      <svg className="w-[1056px] h-[17px] block" viewBox="12 0 1056 17">
        {ticks.map(i => {
          const big = major.includes(i)
          return (
            <rect key={i} x={cx(i) + (big ? -0.700 : 0)} y={0.500} width={big ? 3.500 : 2} height={big ? 15.500 : 9.500}
              fill={big ? '#b4b4b4' : '#8c8c8c'} opacity={Math.min(1, (i - 13) / 6)} />
          )
        })}
      </svg>
      <div className="flex pl-[5px]">
        <Fit className="w-[166px]">20250811</Fit>
        <Fit className="w-[168px] ml-[75px]">20250917</Fit>
        <Fit className="w-[168px] ml-[192px]">20251106</Fit>
        <Fit className="w-[168px] ml-[109px]">20251218</Fit>
      </div>
    </div>
  )
}

function Banner() {
  return (
    <div className="h-[117px] flex-shrink-0 px-[18px] pt-[18px]">
      <div className="h-[90px] rounded-[44px] bg-[#111922] flex items-center pl-[29px] text-[#4a74b4]">
        <svg className="w-[47px] h-[40px]" viewBox="0 0 47 40" fill="#4373bd">
          <path d="M1 13h3.500v15H1zM10 13.500L42 2V0h4v40h-4v-2l-15-5-1 4-11-3-1-4-4-1z" />
        </svg>
        <Fit className="ml-[53px] w-[662px] text-[39px] !pt-0">减税倒计时！今日存养老，未来享轻松</Fit>
        <span className="ml-[165px] w-[2px] h-[36px] bg-[#3a5c90]" />
        <svg className="ml-[16px] w-[32px] h-[32px]" viewBox="0 0 32 32" stroke="currentColor" strokeWidth={3}>
          <path d="M1 1l30 30M31 1L1 31" />
        </svg>
      </div>
    </div>
  )
}

const iconProps = { className: 'w-[66px] h-[60px]', viewBox: '0 0 66 60', fill: 'none', stroke: '#8f8f92', strokeWidth: 2.8 }

const NAV_ITEMS = [
  {
    label: '交易',
    icon: (
      <svg {...iconProps}>
        <path d="M17 9.500A28 28 0 0 1 59 42M50.500 53A28 28 0 0 1 10 18M0 22l10-4-1 4M66 41l-8.500 5 2-7" />
        <path d="M23.500 19.500L33 29.500l9.500-10M33 29v18M22.500 30h21M22.500 38.500h21" strokeWidth={3} />
      </svg>
    ),
  },
  {
    label: '发帖',
    icon: (
      <svg {...iconProps}>
        <path d="M45 5H14q-7 0-7 7v37q0 7 7 7h37q7 0 7-7V20" />
        <path d="M24 39l2.500-7.500L49 10l4 4-22 22zM50.500 8.500L55 4.500q3-1 4.500 1t-.5 4l-4 4z" fill="#8f8f92" stroke="none" />
      </svg>
    ),
  },
  {
    label: '功能',
    icon: (
      <svg {...iconProps}>
        <rect x="8" y="7" width="22.500" height="22" rx="3" />
        <rect x="8" y="34" width="22.500" height="22" rx="3" />
        <rect x="35.500" y="34" width="22.500" height="22" rx="3" />
        <rect x="38" y="9" width="18" height="18" rx="2.500" transform="rotate(45 47 18)" />
      </svg>
    ),
  },
  {
    label: '设自选',
    icon: (
      <svg {...iconProps}>
        <circle cx="33" cy="31" r="26.500" />
        <g fill="#8f8f92" stroke="none">
          <circle cx="21" cy="31" r="2.800" />
          <circle cx="33" cy="31" r="2.800" />
          <circle cx="45" cy="31" r="2.800" />
        </g>
      </svg>
    ),
  },
]

function BottomBar() {
  return (
    <footer className="h-[136px] flex-shrink-0 border-t-2 border-[#2a2a2a] bg-[#1c1c1c] flex text-[#919194]">
      <div className="w-[275px] flex flex-col items-center text-[#cb3a2c]">
        <svg className="mt-[8px] w-[22px] h-[8px]" viewBox="0 0 22 8" fill="#77777a">
          <path d="M0 8L11 0l11 8z" />
        </svg>
        <Fit className="mt-[11px] ml-[2px] w-[143px] text-[41px]">3874.76</Fit>
        <div className="flex items-center mt-[9px] gap-[49px] w-[226px] text-[38px] ml-[32px]">
          <Fit className="w-[72px] text-[35px] text-[#9a9a9c]">上证</Fit>
          <Fit className="w-[105px]">0.12%</Fit>
        </div>
      </div>
      {NAV_ITEMS.map(({ label, icon }) => (
        <div key={label} className="w-[201px] flex flex-col items-center pt-[7px]">
          {icon}
          <span className="mt-[21px] text-[35px] leading-none">{label}</span>
        </div>
      ))}
    </footer>
  )
}

function SystemBar() {
  return (
    <div className="h-[116px] flex-shrink-0 bg-[#fcfcfc] flex justify-center">
      <svg className="w-[520px] h-[116px]" viewBox="280 0 520 116" fill="none" stroke="#8a8a8a" strokeWidth={3.400} strokeLinejoin="round">
        <rect x="289" y="38" width="41" height="41" rx="1.500" />
        <circle cx="540" cy="58.500" r="22.500" />
        <path d="M788 36v44L750 60q-1.500-1.500 0-3.500z" />
      </svg>
    </div>
  )
}

export default function App() {
  return (
    <div className="w-[1080px] h-[2243px] overflow-hidden flex flex-col bg-[#1c1c1c] font-[Roboto,'Noto_Sans_CJK_SC',sans-serif]">
      <Header />
      <Quote />
      <Notice />
      <Tabs />

      <main className="bg-[#0d0d0d] flex flex-col flex-shrink-0">
        <div className="h-[55px] flex items-center pl-4 pt-[6px] text-[39px] text-white">
          <Picker className="w-[108px] !pl-[8px] !pr-[8px]" width="w-[71px]">均线</Picker>
          <Fit className="ml-[13px] w-[163px]">MA5:2.58</Fit>
          <Arrow down className="w-[19px] ml-[8px]" />
          <Fit className="ml-[12px] w-[124px] text-[#f5e66b]">10:2.64</Fit>
          <Arrow down className="w-[19px] ml-[9px] text-[#f5e66b]" />
          <Fit className="ml-[12px] w-[122px] text-[#a632ad]">20:2.71</Fit>
          <Arrow down className="w-[19px] ml-[12px] text-[#a632ad]" />
          <button className="ml-[109px] w-[127px] h-[46px] rounded-md bg-[#333333] pl-[12px] pr-[6px] flex items-center justify-between text-[36px]">
            <Fit className="w-[86px]">DK点</Fit>
            <svg className="w-[11px] h-[11px] mt-6" viewBox="0 0 11 11" fill="#fff">
              <path d="M11 0v11H0z" />
            </svg>
          </button>
          <button className="ml-[39px] w-[132px] h-[46px] rounded-md bg-[#333333] text-[36px] leading-none flex items-center justify-center">
            <Fit className="w-[108px]">前复权</Fit>
          </button>
        </div>
        <KChart />

        <div className="h-[60px] flex items-center pl-4 text-[40px] text-white">
          <Picker className="w-[152px]" width="w-[107px]">成交量</Picker>
          <Fit className="ml-[4px] w-[80px]">11.52万</Fit>
          <Arrow down className="w-[14px] ml-[6px]" />
          <Fit className="ml-[9px] w-[139px] text-[#f5e66b]">MA1:17.13万</Fit>
          <Arrow down className="w-[14px] ml-[5px] text-[#f5e66b]" />
          <Fit className="ml-[9px] w-[139px] text-[#d04ad2]">MA2:19.22万</Fit>
          <Arrow down className="w-[14px] ml-[5px] text-[#d04ad2]" />
          <Fit className="ml-[10px] w-[138px] text-[#6fbf5f]">MA3:24.22万</Fit>
          <Arrow down className="w-[14px] ml-[5px] text-[#6fbf5f]" />
          <Fit className="ml-[10px] w-[203px] text-[#808080]">虚拟成交量:19.72万</Fit>
          <button className="ml-[37px] w-[45px] h-[61px] rounded-l-xl bg-[#3b3b3b] flex items-center justify-center">
            <svg className="w-[18px] h-[28px]" viewBox="0 0 18 28" fill="none" stroke="#fff" strokeWidth={4} strokeLinecap="round" strokeLinejoin="round">
              <path d="M15 2L3 14l12 12" />
            </svg>
          </button>
        </div>
        <VolumeChart />

        <div className="h-[61px] flex items-center pl-4 text-[41px] text-white">
          <Picker className="w-[152px] !pl-[4px]" width="w-[111px]">MACD</Picker>
          <Fit className="ml-[3px] w-[169px]">DIF:-0.09</Fit>
          <Arrow className="w-[21px] ml-[9px]" />
          <Fit className="ml-[20px] w-[189px] text-[#f5e66b]">DEA:-0.08</Fit>
          <Arrow down className="w-[21px] ml-[9px] text-[#f5e66b]" />
          <Fit className="ml-[19px] w-[144px] text-[#d04ad2]">M:-0.02</Fit>
          <Arrow className="w-[21px] ml-[9px] text-[#d04ad2]" />
        </div>
        <MacdChart />

        <div className="h-[61px] flex items-center pl-4 text-[41px] text-white">
          <Picker className="w-[187px]" width="w-[143px]">大单净量</Picker>
          <Fit className="ml-[7px] w-[109px]">10736</Fit>
          <Arrow className="w-[21px] ml-[8px]" />
          <Fit className="ml-[20px] w-[239px] text-[#a93a31]">大单买:20036</Fit>
          <Fit className="ml-[22px] w-[217px] text-[#76e6ea]">大单卖:9300</Fit>
        </div>
        <OrdersChart />

        <div className="h-[61px] flex items-center pl-4 text-[41px] text-white">
          <Picker className="w-[113px] !pl-[4px]" width="w-[70px]">KDJ</Picker>
          <Fit className="ml-[1px] w-[138px]">K:20.60</Fit>
          <Arrow className="w-[21px] ml-[8px]" />
          <Fit className="ml-[20px] w-[140px] text-[#f5e66b]">D:15.77</Fit>
          <Arrow className="w-[21px] ml-[9px] text-[#f5e66b]" />
          <Fit className="ml-[21px] w-[130px] text-[#d04ad2]">J:30.25</Fit>
          <Arrow className="w-[21px] ml-[9px] text-[#d04ad2]" />
        </div>
        <KdjChart />
        <TimeAxis />
        <Banner />
      </main>

      <BottomBar />
      <SystemBar />
    </div>
  )
}
